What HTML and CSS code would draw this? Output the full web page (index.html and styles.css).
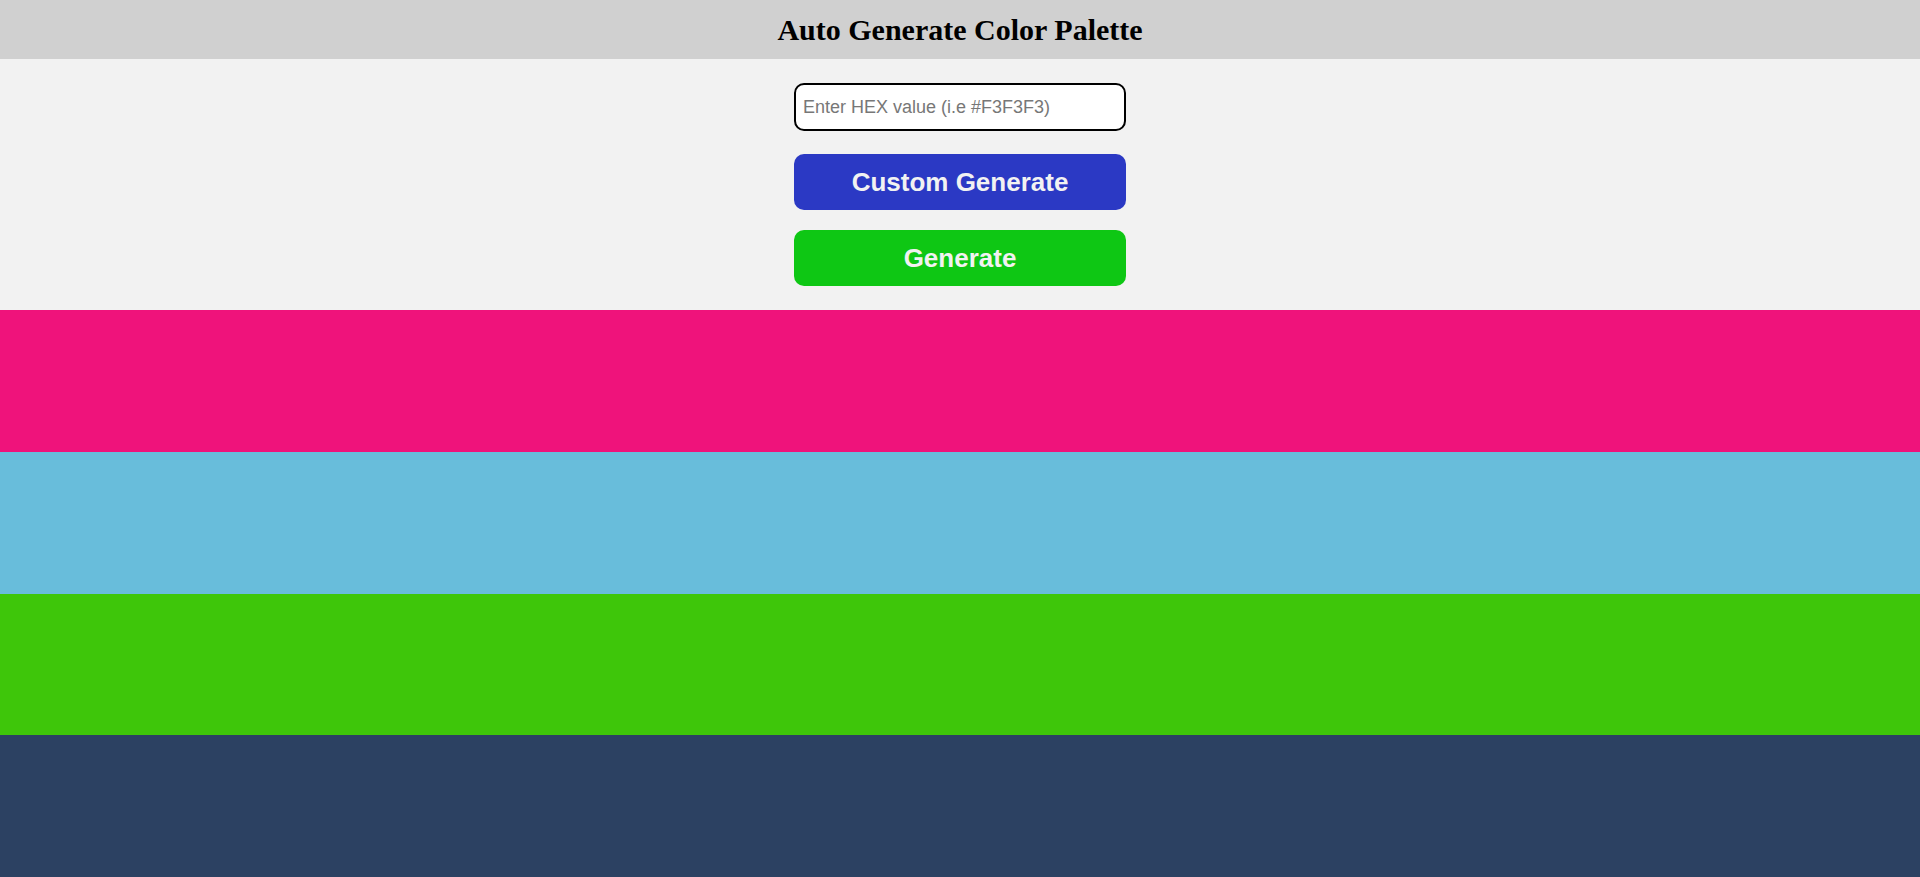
FILE: index.html
```html
<!DOCTYPE html>
<html>
<head>
<meta charset="utf-8">
<title>Auto Generate Color Palette</title>
<link rel="stylesheet" href="styles.css">
</head>
<body>
<div class="page">
  <header class="header"><h1 class="title">Auto Generate Color Palette</h1></header>
  <section class="controls">
    <input class="hex-input" type="text" placeholder="Enter HEX value (i.e #F3F3F3)">
    <button class="btn btn-custom">Custom Generate</button>
    <button class="btn btn-generate">Generate</button>
  </section>
  <section class="palette">
    <div class="swatch swatch-1"></div>
    <div class="swatch swatch-2"></div>
    <div class="swatch swatch-3"></div>
    <div class="swatch swatch-4"></div>
  </section>
</div>
</body>
</html>
```
FILE: styles.css
```css
html, body { margin: 0; padding: 0; height: 100%; }
body { font-family: "Liberation Serif", serif; }
.page { display: flex; flex-direction: column; height: 877px; }
.header { background: #d0d0d0; height: 59px; display: flex; align-items: center; justify-content: center; }
.title { margin: 0; font-size: 30px; font-weight: bold; color: #000; font-family: "Liberation Serif", serif; }
.controls { background: #f2f2f2; display: flex; flex-direction: column; align-items: center; padding: 24px 0 24px; }
.hex-input { box-sizing: border-box; width: 332px; height: 48px; border: 2px solid #000; border-radius: 10px; padding: 0 7px; font-family: "Liberation Sans", Arial, sans-serif; font-size: 18px; background: #fff; outline: none; }
.hex-input::placeholder { color: #777; }
.btn { box-sizing: border-box; width: 332px; height: 56px; border: none; border-radius: 10px; color: #f2f2f2; font-family: "Liberation Sans", Arial, sans-serif; font-weight: bold; font-size: 26px; }
.btn-custom { background: #2b39c4; margin-top: 23px; }
.btn-generate { background: #0ec714; margin-top: 20px; }
.palette { flex: 1; display: flex; flex-direction: column; }
.swatch { flex: 1; }
.swatch-1 { background: #ef137b; }
.swatch-2 { background: #68bddb; }
.swatch-3 { background: #3ec60a; }
.swatch-4 { background: #2c4162; }
```
